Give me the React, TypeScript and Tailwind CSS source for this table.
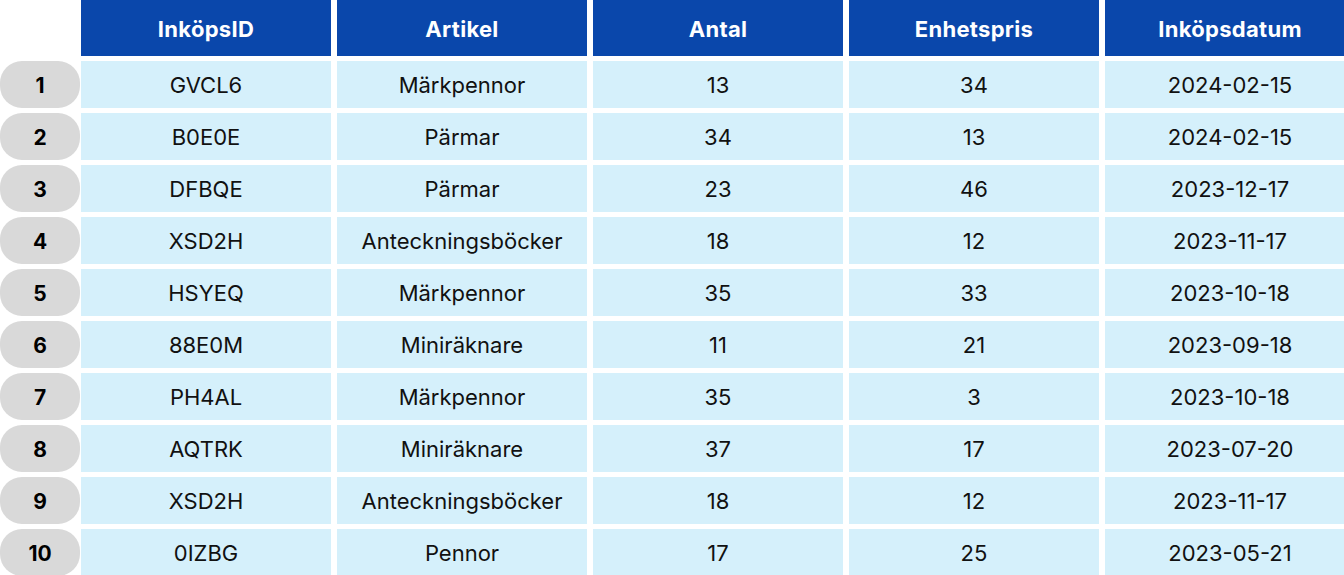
const headers = ['InköpsID', 'Artikel', 'Antal', 'Enhetspris', 'Inköpsdatum'];

const rows = [
  ['GVCL6', 'Märkpennor', '13', '34', '2024-02-15'],
  ['B0E0E', 'Pärmar', '34', '13', '2024-02-15'],
  ['DFBQE', 'Pärmar', '23', '46', '2023-12-17'],
  ['XSD2H', 'Anteckningsböcker', '18', '12', '2023-11-17'],
  ['HSYEQ', 'Märkpennor', '35', '33', '2023-10-18'],
  ['88E0M', 'Miniräknare', '11', '21', '2023-09-18'],
  ['PH4AL', 'Märkpennor', '35', '3', '2023-10-18'],
  ['AQTRK', 'Miniräknare', '37', '17', '2023-07-20'],
  ['XSD2H', 'Anteckningsböcker', '18', '12', '2023-11-17'],
  ['0IZBG', 'Pennor', '17', '25', '2023-05-21'],
];

export default function App() {
  return (
    <div className="w-[1344px] h-[575px] overflow-hidden bg-white font-['Inter',sans-serif]">
      <div className="flex gap-[1px] w-max">
        {/* row numbers */}
        <div className="w-[80px] flex flex-col gap-[5px]">
          <div className="h-[56px]" />
          {rows.map((_, i) => (
            <div
              key={i}
              className="h-[47px] pt-[2px] bg-[#d9d9d9] rounded-[22px] flex items-center justify-center text-[21px] font-bold text-black"
            >
              {i + 1}
            </div>
          ))}
        </div>

        {/* table */}
        <div className="grid grid-cols-[250px_250px_250px_250px_250px] gap-x-[6px] gap-y-[5px]">
          {headers.map((h) => (
            <div
              key={h}
              className="h-[56px] pt-[2px] bg-[#0a47ab] text-white font-bold text-[22px] tracking-[0.3px] flex items-center justify-center"
            >
              {h}
            </div>
          ))}
          {rows.map((r, i) =>
            r.map((c, j) => (
              <div
                key={`${i}-${j}`}
                className="h-[47px] pt-[2px] bg-[#d5f0fb] flex items-center justify-center text-[22px] text-[#111]"
              >
                {c}
              </div>
            ))
          )}
        </div>
      </div>
    </div>
  );
}
